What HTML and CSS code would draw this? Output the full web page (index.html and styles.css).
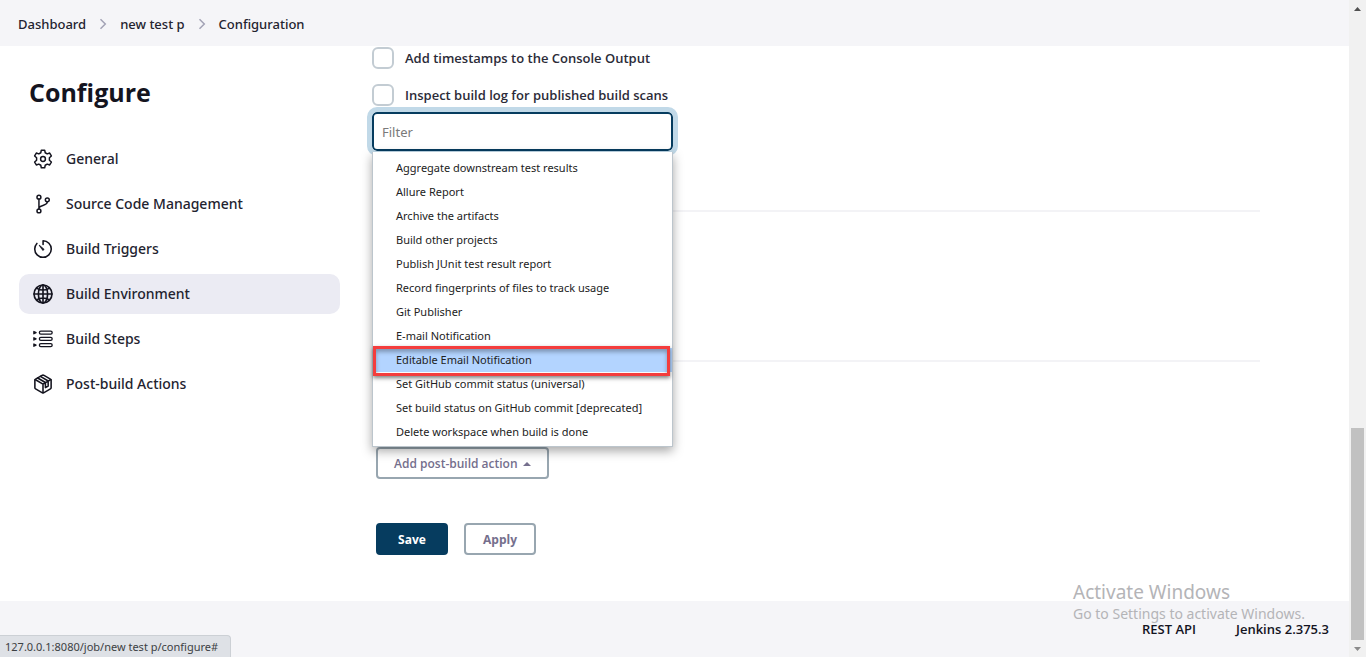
FILE: index.html
```html
<!DOCTYPE html>
<html lang="en">
<head>
<meta charset="utf-8">
<title>new test p Config [Jenkins]</title>
<link rel="stylesheet" href="styles.css">
</head>
<body>
<div class="window">
  <div class="page">
    <header>
      <nav class="breadcrumbs" aria-label="Breadcrumb">
        <a href="#">Dashboard</a>
        <svg class="chevron" viewBox="0 0 8 12"><path d="M1.5 1.2 6.3 6 1.5 10.8"/></svg>
        <a href="#">new test p</a>
        <svg class="chevron" viewBox="0 0 8 12"><path d="M1.5 1.2 6.3 6 1.5 10.8"/></svg>
        <a href="#">Configuration</a>
      </nav>
    </header>
    <div class="columns">
      <aside class="sidebar">
        <h1>Configure</h1>
        <nav class="tasks" aria-label="Configure sections">
          <a class="task" href="#">
            <svg class="icon" viewBox="0 0 512 512" stroke-width="38"><circle cx="256" cy="256" r="62"/><path d="M213 30h86l14 66 50 29 64-21 43 75-50 46v62l50 46-43 75-64-21-50 29-14 66h-86l-14-66-50-29-64 21-43-75 50-46v-62l-50-46 43-75 64 21 50-29z"/></svg>
            General
          </a>
          <a class="task" href="#">
            <svg class="icon" viewBox="0 0 512 512" stroke-width="38"><circle cx="152" cy="80" r="50"/><circle cx="152" cy="432" r="50"/><circle cx="366" cy="150" r="50"/><path d="M152 382V130M366 200c0 120-214 65-214 172"/></svg>
            Source Code Management
          </a>
          <a class="task" href="#">
            <svg class="icon" viewBox="0 0 512 512" stroke-width="40"><path d="M100 114A212 212 0 0 0 44 254c0 118 96 214 212 214s212-96 212-212c0-116-92-210-210-212v96"/><path d="m233 279-80-108a12 12 0 0 1 18-18l103 90a29 29 0 1 1-41 36z" fill="currentColor" stroke="none"/></svg>
            Build Triggers
          </a>
          <a class="task active" href="#">
            <svg class="icon" viewBox="0 0 512 512" stroke-width="42"><circle cx="256" cy="256" r="230"/><ellipse cx="256" cy="256" rx="118" ry="230"/><path d="M104 110c40 30 94 44 152 44s112-14 152-44M408 402c-40-30-94-44-152-44s-112 14-152 44M256 26v460M486 256H26"/></svg>
            Build Environment
          </a>
          <a class="task" href="#">
            <svg class="icon" viewBox="0 0 512 512" stroke-width="34"><rect x="164" y="54" width="326" height="78" rx="36"/><rect x="164" y="214" width="326" height="78" rx="36"/><rect x="164" y="374" width="326" height="78" rx="36"/><path d="M22 64v58l56-29zM22 224v58l56-29zM22 384v58l56-29z"/></svg>
            Build Steps
          </a>
          <a class="task" href="#">
            <svg class="icon" viewBox="0 0 512 512" stroke-width="40"><path d="M464 352V160a34 34 0 0 0-18-30L282 36a54 54 0 0 0-52 0L66 130a34 34 0 0 0-18 30v192a34 34 0 0 0 18 30l164 94a54 54 0 0 0 52 0l164-94a34 34 0 0 0 18-30z"/><path d="M54 142l202 118 202-118M256 480V260M118 102l200 116v130l70-40V178L190 62"/></svg>
            Post-build Actions
          </a>
        </nav>
      </aside>
      <main>
        <form class="config">
          <div class="checks">
            <label class="check"><input type="checkbox">Add timestamps to the Console Output</label>
            <label class="check"><input type="checkbox">Inspect build log for published build scans</label>
          </div>
          <section class="section section-env"></section>
          <section class="section section-steps"></section>
          <section class="post-build">
            <div class="dropdown">
              <button class="button" type="button">Add post-build action <svg class="caret" viewBox="0 0 8 4"><path d="M0 4 4 0l4 4z"/></svg></button>
              <div class="menu">
                <input class="filter" type="text" placeholder="Filter" aria-label="Filter">
                <ul class="menu-list">
                  <li><a href="#">Aggregate downstream test results</a></li>
                  <li><a href="#">Allure Report</a></li>
                  <li><a href="#">Archive the artifacts</a></li>
                  <li><a href="#">Build other projects</a></li>
                  <li><a href="#">Publish JUnit test result report</a></li>
                  <li><a href="#">Record fingerprints of files to track usage</a></li>
                  <li><a href="#">Git Publisher</a></li>
                  <li><a href="#">E-mail Notification</a></li>
                  <li class="selected"><a href="#">Editable Email Notification</a></li>
                  <li><a href="#">Set GitHub commit status (universal)</a></li>
                  <li><a href="#">Set build status on GitHub commit [deprecated]</a></li>
                  <li><a href="#">Delete workspace when build is done</a></li>
                </ul>
              </div>
            </div>
          </section>
          <div class="actions">
            <button class="button primary" type="submit">Save</button>
            <button class="button" type="button">Apply</button>
          </div>
        </form>
      </main>
    </div>
    <footer>
      <a href="#">REST API</a>
      <a href="#">Jenkins 2.375.3</a>
    </footer>
  </div>
  <div class="scrollbar">
    <svg class="arrow" viewBox="0 0 17 17"><path d="M5 11 8.500 7 12 11z"/></svg>
    <div class="track"><div class="thumb"></div></div>
    <svg class="arrow down" viewBox="0 0 17 17"><path d="M5 7 8.500 11 12 7z"/></svg>
  </div>
  <div class="status">127.0.0.1:8080/job/new test p/configure#</div>
  <div class="watermark">
    <p class="watermark-title">Activate Windows</p>
    <p class="watermark-text">Go to Settings to activate Windows.</p>
  </div>
</div>
</body>
</html>
```
FILE: styles.css
```css
* { box-sizing: border-box; }

body {
  margin: 0;
  background: #fff;
  color: #14141f;
  font-family: "Noto Sans", "Open Sans", sans-serif;
  font-size: 13px;
  line-height: 20px;
}

a { color: inherit; text-decoration: none; }
h1, p, ul { margin: 0; padding: 0; }
ul { list-style: none; }
button, input { font: inherit; }

.window {
  position: relative;
  display: grid;
  grid-template-columns: 1fr 17px;
  min-height: 100vh;
}

.page { display: flex; flex-direction: column; }

header {
  padding: 14px 18px 12px;
  background: #f5f5f8;
}

.breadcrumbs { display: flex; align-items: center; gap: 13px; color: #23232f; font-weight: 500; }
.chevron { width: 8px; height: 12px; fill: none; stroke: #a3a3b5; stroke-width: 1.5; }

.columns {
  flex: 1;
  display: grid;
  grid-template-columns: 340px 1fr;
}

.sidebar { padding: 30px 0 0 19px; }

h1 {
  padding-left: 10px;
  font-family: "Open Sans", "Noto Sans", sans-serif;
  font-size: 25px;
  line-height: 32px;
  font-weight: 700;
}

.tasks { display: flex; flex-direction: column; gap: 5px; margin-top: 31px; }

.task {
  display: flex;
  align-items: center;
  gap: 13px;
  height: 40px;
  padding: 0 14px;
  border-radius: 10px;
  color: #23232f;
  font-size: 14px;
  font-weight: 500;
}
.task.active { background: #ebebf3; }

.icon {
  width: 20px;
  height: 20px;
  fill: none;
  stroke: #14141f;
  stroke-linecap: round;
  stroke-linejoin: round;
}

main { padding: 1px 89px 0 32px; }

.checks { display: grid; gap: 15px; }
.check {
  display: flex;
  align-items: center;
  gap: 11px;
  height: 22px;
  color: #2b2b38;
  font-family: "Open Sans", "Noto Sans", sans-serif;
  font-weight: 600;
}
.check input {
  appearance: none;
  width: 22px;
  height: 22px;
  margin: 0;
  border: 2px solid #c3ccd3;
  border-radius: 6px;
  background: #fff;
}

.section { border-bottom: 2px solid #f3f3f6; }
.section-env { height: 106px; }
.section-steps { height: 150px; }

.post-build { padding: 85px 0 44px 4px; }
.dropdown { position: relative; width: fit-content; }

.button {
  display: flex;
  align-items: center;
  justify-content: center;
  gap: 5px;
  min-width: 72px;
  height: 32px;
  padding: 2px 16px 0;
  border: 2px solid #98a6b0;
  border-radius: 4px;
  background: #fff;
  color: #756f8d;
  font-family: "Open Sans", "Noto Sans", sans-serif;
  font-size: 12px;
  font-weight: 600;
}
.actions .button { font-weight: 700; }
.button.primary { border-color: #063c5f; background: #063c5f; color: #fff; }
.caret { width: 8px; height: 4px; fill: currentColor; }

.actions { display: flex; gap: 16px; padding: 0 0 46px 4px; }

.menu {
  position: absolute;
  bottom: 100%;
  left: -4px;
  width: 301px;
}

.filter {
  display: block;
  width: 100%;
  height: 39px;
  padding: 0 8px;
  border: 2px solid #063c5f;
  border-radius: 5px;
  outline: 5px solid #c1d9e8;
  background: #fff;
}
.filter::placeholder { color: #7a7a7a; }

.menu-list {
  position: relative;
  margin-top: 1px;
  padding: 4px 0 2px;
  border: 1px solid #bcc5cc;
  border-top: 0;
  background: #fff;
  box-shadow: 0 4px 10px rgba(0, 0, 0, 0.35);
  color: #222;
  font-size: 11px;
}
.menu-list li { position: relative; height: 24px; padding-left: 23px; line-height: 24px; }
.menu-list .selected { background: #b3d4ff; }
.menu-list .selected::after {
  content: "";
  position: absolute;
  inset: -2px 2px -4px 0;
  z-index: 1;
  border: 3px solid #f43d3d;
  box-shadow: 0 2px 4px rgba(0, 0, 0, 0.5), inset 0 3px 4px rgba(0, 0, 0, 0.3);
}

footer {
  display: flex;
  justify-content: flex-end;
  gap: 40px;
  height: 56px;
  padding: 18px 20px;
  background: #f5f5f8;
  font-family: "Open Sans", "Noto Sans", sans-serif;
  font-weight: 600;
}

.scrollbar { display: flex; flex-direction: column; background: #f1f1f1; }
.arrow { width: 17px; height: 17px; fill: #505050; }
.arrow.down { fill: #8a8a8a; }
.track { flex: 1; display: flex; flex-direction: column; justify-content: flex-end; }
.thumb { height: 34%; margin: 0 2px; background: #c1c1c1; }

.status {
  position: absolute;
  bottom: 0;
  left: 0;
  padding: 1px 12px 0 5px;
  border: 1px solid #ccd0d5;
  border-width: 1px 1px 0 0;
  border-radius: 0 4px 0 0;
  background: #dee1e6;
  color: #3c4043;
  font-size: 11px;
}

.watermark {
  position: absolute;
  right: 57px;
  bottom: 33px;
  width: 236px;
  color: #b4b4b7;
  pointer-events: none;
}
.watermark-title { font-size: 19px; line-height: 24px; }
.watermark-text { font-size: 14px; line-height: 20px; }
```
